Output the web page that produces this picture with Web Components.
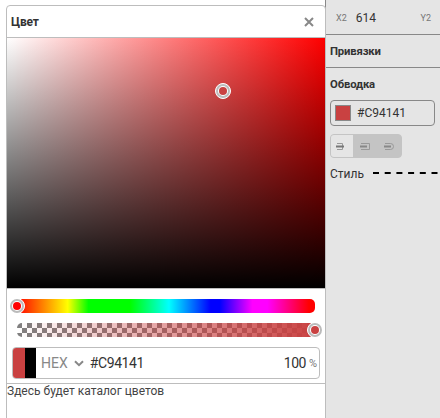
<!DOCTYPE html>
<html lang="ru"><head><meta charset="utf-8"><title>Цвет</title>
<style>html,body{margin:0;height:100%;overflow:hidden;background:#fff}body{font-family:Roboto,sans-serif;color:#333}</style></head>
<body><editor-app></editor-app>
<script>
const define = (name, html) => customElements.define(name, class extends HTMLElement {
  constructor() { super(); this.attachShadow({ mode: 'open' }).innerHTML = html; }
});

define('color-knob', `<style>
:host{display:block;box-sizing:border-box;width:16px;height:16px;border-radius:50%;border:1px solid #fff;background:#fff}
i{display:block;box-sizing:border-box;width:14px;height:14px;border-radius:50%;border:2px solid #bbb;padding:1px}
b{display:block;width:8px;height:8px;border-radius:50%;background:var(--c,#c94141)}
</style><i><b></b></i>`);

define('color-field', `<style>
:host{display:block;position:relative;height:250px;border-bottom:1px solid #bdbdbd;background:linear-gradient(to top,#000,transparent),linear-gradient(to right,#fff,#f00)}
color-knob{position:absolute;left:208px;top:45px}
</style><color-knob></color-knob>`);

define('hue-slider', `<style>
:host{display:block;position:relative;height:14px;border-radius:5px;background:linear-gradient(to right,#f00 0%,#ff0 17%,#0f0 24%,#0f0 38%,#0ff 51%,#00f 65%,#00f 68%,#f0f 79%,#f0f 84%,#f00 98%)}
color-knob{position:absolute;left:-8px;top:-1px;--c:#f00}
</style><color-knob></color-knob>`);

define('alpha-slider', `<style>
:host{display:block;position:relative;height:14px;border-radius:5px;background:linear-gradient(to right,rgba(201,65,65,0),#c94141),repeating-conic-gradient(#fff 0 25%,#808080 0 50%) 0 0/10px 10px}
color-knob{position:absolute;right:-8px;top:-1px}
</style><color-knob></color-knob>`);

define('hex-input', `<style>
:host{display:flex;align-items:center;box-sizing:border-box;height:32px;border:1px solid #bdbdbd;border-radius:4px;overflow:hidden;font-size:14px;padding-right:2px}
.pair{width:23px;align-self:stretch;background:linear-gradient(to right,#c94141 12px,#000 12px);margin-right:5px}
.mode{color:#888}svg{margin:0 6px 0 6px}.val{flex:1;letter-spacing:-.4px}.num{letter-spacing:-.5px}small{font-size:11px;color:#777;margin-left:3px}
</style><span class="pair"></span><span class="mode">HEX</span>
<svg width="10" height="7" viewBox="0 0 10 7"><path d="M1 1.2l4 4 4-4" fill="none" stroke="#888" stroke-width="2"/></svg>
<span class="val">#C94141</span><span class="num">100</span><small>%</small>`);

define('color-dialog', `<style>
:host{display:flex;flex-direction:column;box-sizing:border-box;width:320px;height:420px;border:1px solid #bdbdbd;border-radius:4px 4px 0 0;background:#fff;overflow:hidden}
header{display:flex;align-items:center;justify-content:space-between;height:31px;padding:0 11px 0 4px;border-bottom:1px solid #bdbdbd;font-size:12px;font-weight:700;letter-spacing:-.2px}
.sliders{display:grid;gap:10px;padding:10px 10px 0}
.hex{padding:10px 5px 4px}
.catalog{border-top:1px solid #bdbdbd;font-size:12px;line-height:14px;color:#444}
</style><header><slot name="title"></slot><svg width="10" height="10" viewBox="0 0 10 10"><path d="M1 1l8 8M9 1l-8 8" stroke="#888" stroke-width="2"/></svg></header>
<color-field></color-field><div class="sliders"><hue-slider></hue-slider><alpha-slider></alpha-slider></div>
<div class="hex"><hex-input></hex-input></div><div class="catalog"><slot></slot></div>`);

define('cap-switch', `<style>
:host{display:flex;box-sizing:border-box;width:72px;height:24px;border:1px solid #c4c4c4;border-radius:4px;background:#c4c4c4;overflow:hidden}
span{box-sizing:border-box;flex:0 0 24px;padding:7px 0 0 7px}.on{background:#e5e5e5;flex-basis:22px;padding-left:5px}
svg{display:block;fill:none;stroke:#999}
</style>
<span class="on"><svg width="10" height="9" viewBox="0 0 10 9"><path d="M1 1.5h5.5v6H1"/><path d="M0 4.5h8" stroke="#777" stroke-width="2"/></svg></span>
<span><svg width="11" height="9" viewBox="0 0 11 9"><path d="M1 1.5h8.5v6H1"/><path d="M0 4.5h7" stroke="#888" stroke-width="2"/></svg></span>
<span><svg width="11" height="9" viewBox="0 0 11 9"><path d="M1 1.5h5.5a3 3 0 0 1 0 6H1"/><path d="M0 4.5h7" stroke="#888" stroke-width="2"/></svg></span>`);

define('stroke-panel', `<style>
:host{display:flex;flex-direction:column;background:#e5e5e5;font-size:12px;overflow:hidden}
.coords{display:flex;align-items:center;box-sizing:border-box;height:35px;border-bottom:1px solid #888;padding:1px 0 0 10px}
.coords small{font-size:9px;color:#777}.coords b{font-weight:400;margin-left:9px;flex:1}.coords .y{margin-right:9px}
h3{margin:0;font-size:11.3px;letter-spacing:-.15px;line-height:33px;height:32px;padding-left:4px}h3.line{border-bottom:1px solid #888}
.color{display:flex;align-items:center;box-sizing:border-box;width:105px;height:26px;margin:0 0 8px 4px;border:1px solid #888;border-radius:4px;padding-left:4px}
.color i{box-sizing:border-box;width:16px;height:16px;border:1px solid #888;background:#c94141;margin-right:6px}
cap-switch{margin-left:4px}.style{display:flex;align-items:center;height:22px;margin:5px 0 0 4px}.style svg{margin:-3px 0 0 9px;flex:none}
</style><div class="coords"><small>X2</small><b>614</b><small class="y">Y2</small></div>
<h3 class="line">Привязки</h3><h3>Обводка</h3><div class="color"><i></i><span>#C94141</span></div>
<cap-switch></cap-switch><div class="style"><span>Стиль</span><svg width="70" height="2"><path d="M0 1h70" stroke="#000" stroke-width="2" stroke-dasharray="6 5.7"/></svg></div>`);

define('editor-app', `<style>
:host{display:grid;grid-template-columns:326px 114px;width:440px;height:418px;overflow:hidden}
main{border-right:1px solid #888;padding:5px 0 0 6px;box-sizing:border-box}
</style><main><color-dialog><span slot="title">Цвет</span>Здесь будет каталог цветов</color-dialog></main><stroke-panel></stroke-panel>`);
</script></body></html>
